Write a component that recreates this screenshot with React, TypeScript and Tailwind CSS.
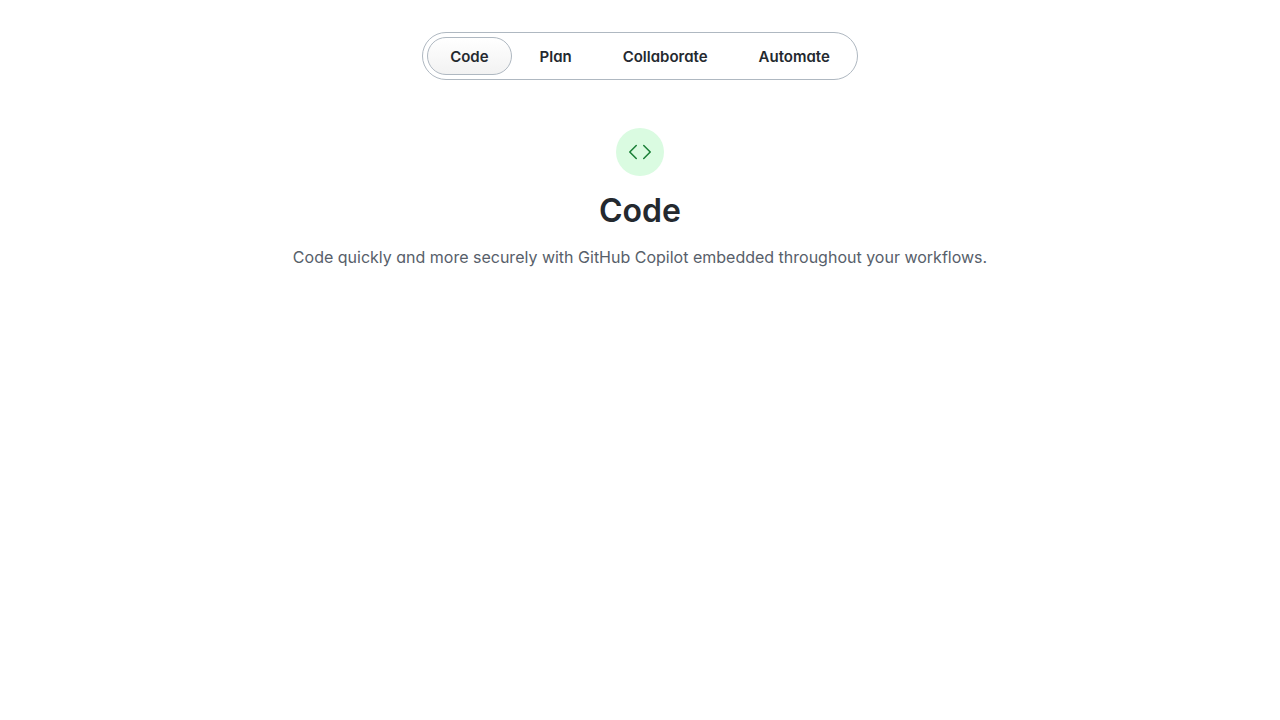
import { useState } from "react";

const tabs = [
  { name: "Code", text: "Code quickly and more securely with GitHub Copilot embedded throughout your workflows." },
  { name: "Plan", text: "" },
  { name: "Collaborate", text: "" },
  { name: "Automate", text: "" },
];

export default function App() {
  const [active, setActive] = useState(0);
  const tab = tabs[active];
  return (
    <main className="flex flex-col items-center px-6 pt-8 font-['Inter','Liberation_Sans',sans-serif] text-[#24292f] [font-feature-settings:'cv11']">
      <div role="tablist" aria-label="Features" className="flex gap-[5px] rounded-full border border-[#afb8c1] p-1">
        {tabs.map((t, i) => (
          <button
            key={t.name}
            id={`tab-${i}`}
            type="button"
            role="tab"
            aria-selected={i === active}
            aria-controls="feature-panel"
            onClick={() => setActive(i)}
            className={
              "rounded-full border px-[22px] pt-[9px] pb-[7px] text-[15px] leading-5 font-semibold " +
              (i === active
                ? "border-[#afb8c1] bg-linear-to-b from-white to-[#f2f2f2]"
                : "border-transparent")
            }
          >
            {t.name}
          </button>
        ))}
      </div>
      <section id="feature-panel" role="tabpanel" aria-labelledby={`tab-${active}`} className="mt-12 flex flex-col items-center text-center">
        <div className="flex size-12 items-center justify-center rounded-full bg-[#dafbe1] text-[#1a7f37]">
          <svg aria-hidden="true" viewBox="0 0 24 24" className="size-6" fill="currentColor">
            <path d="M15.22 4.97a.75.75 0 0 1 1.06 0l6.5 6.5a.75.75 0 0 1 0 1.06l-6.5 6.5a.749.749 0 0 1-1.275-.326.749.749 0 0 1 .215-.734L21.19 12l-5.97-5.97a.75.75 0 0 1 0-1.06Zm-6.44 0a.75.75 0 0 1 0 1.06L2.81 12l5.97 5.97a.749.749 0 0 1-.326 1.275.749.749 0 0 1-.734-.215l-6.5-6.5a.75.75 0 0 1 0-1.06l6.5-6.5a.75.75 0 0 1 1.06 0Z" />
          </svg>
        </div>
        <h1 className="mt-[13px] text-[32px] leading-11 font-semibold">{tab.name}</h1>
        <p className="mt-3 text-base leading-6 text-[#57606a]">{tab.text}</p>
      </section>
    </main>
  );
}
